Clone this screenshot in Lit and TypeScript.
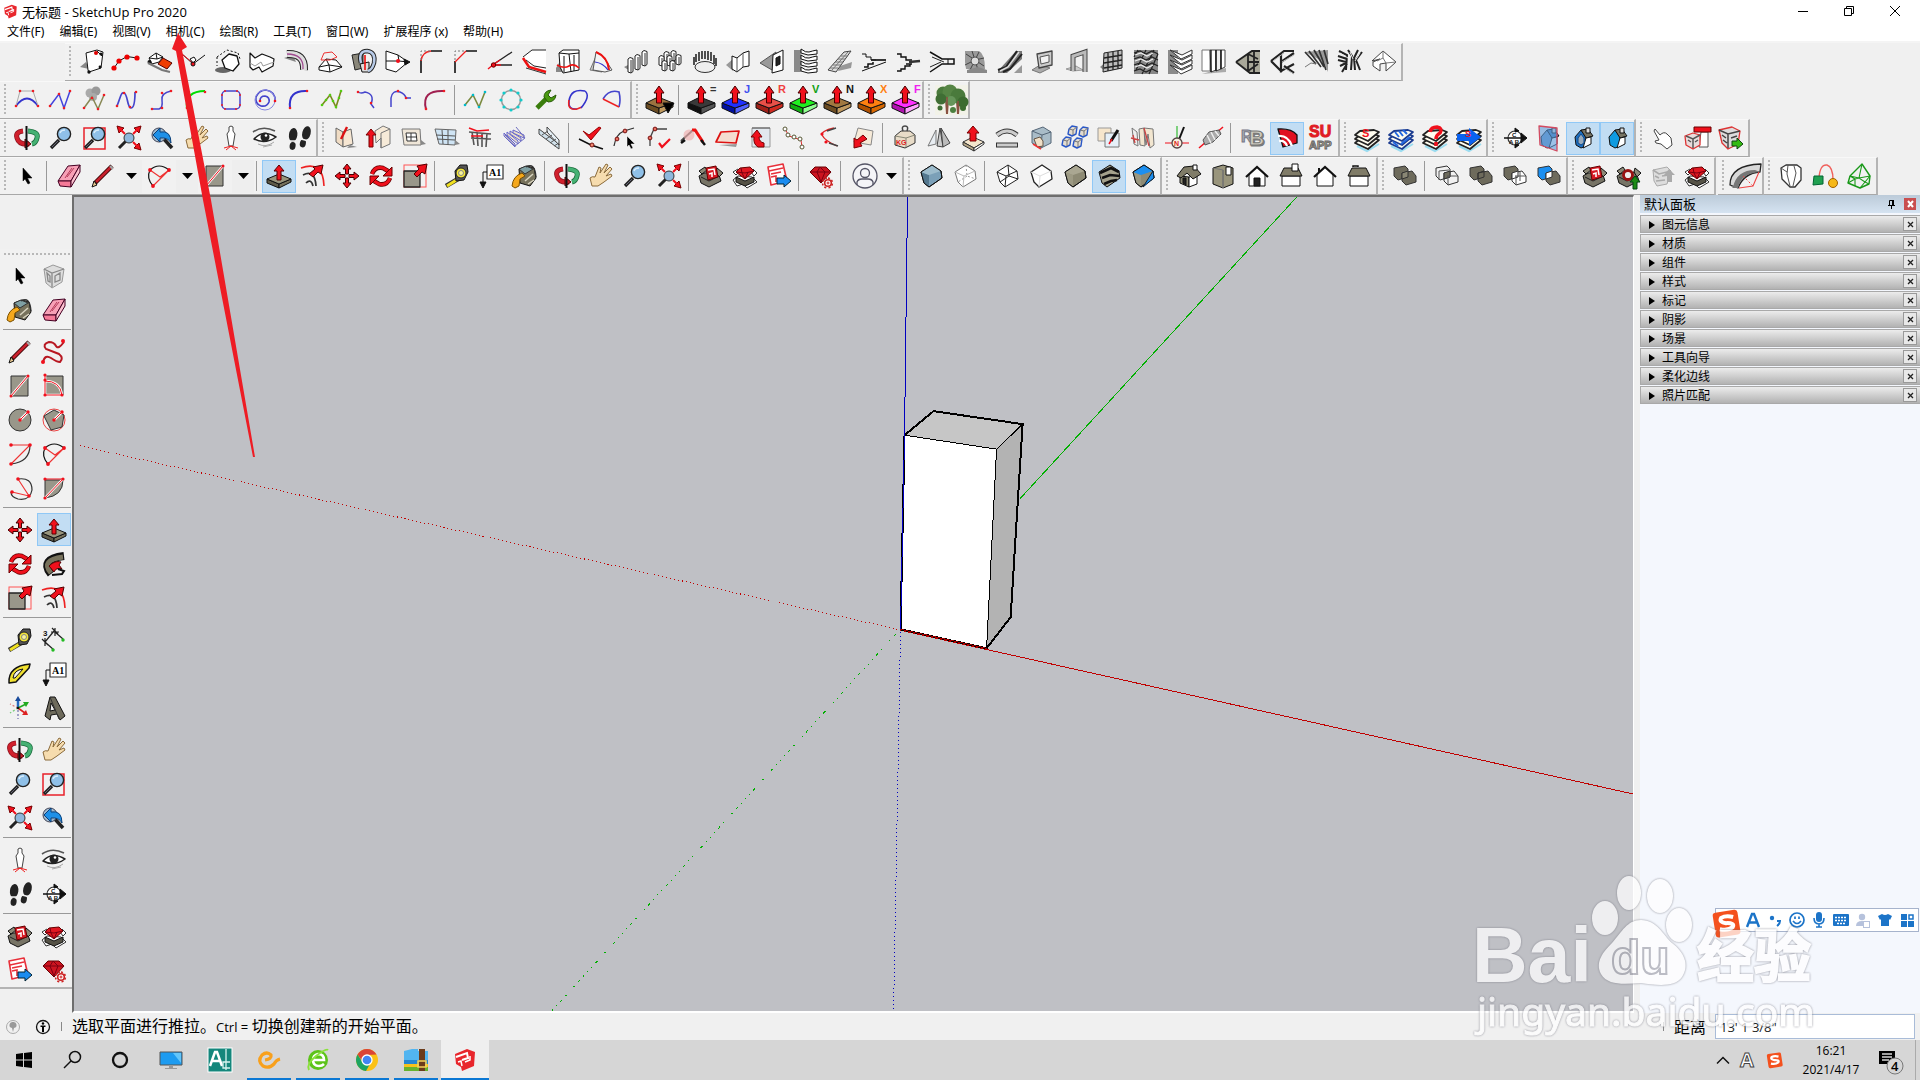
import { LitElement, html, svg, css } from "lit";
import { customElement, property } from "lit/decorators.js";
import { classMap } from "lit/directives/class-map.js";

/* ---------- drawing helpers: every icon lives on a 24 x 24 grid ---------- */
const RED = "#f0101c";
const INK = "#111";
const L = (d: string, s = INK, w = 1) => svg`<path d=${d} fill="none" stroke=${s} stroke-width=${w} />`;
const D = (d: string, s = INK, w = 1) => svg`<path d=${d} fill="none" stroke=${s} stroke-width=${w} stroke-dasharray="2 2" />`;
const F = (d: string, f = "#fff", s = INK, w = 1) => svg`<path d=${d} fill=${f} stroke=${s} stroke-width=${w} stroke-linejoin="round" />`;
const C = (x: number, y: number, r: number, f = RED, s = "none", w = 1) =>
  svg`<circle cx=${x} cy=${y} r=${r} fill=${f} stroke=${s} stroke-width=${w} />`;
const T = (x: number, y: number, t: string, size: number, f = INK, s = "none") =>
  svg`<text x=${x} y=${y} font-size=${size} font-weight="700" fill=${f} stroke=${s}>${t}</text>`;
const dots = (pts: number[][], f = "#ee1c24", r = 1.3) => pts.map(([x, y]) => C(x, y, r, f));
const columns = (pts: number[][], h: number) =>
  pts.map(([x, y]) => [F(`M${x} ${y}l2-1.5 3 1v${h}l-2 1.5-3-1Z`, "#fff", "#222"), L(`M${x + 3} ${y + 1}v${h}`, "#333")]);

const slab = (top: string, left: string, right: string) => [
  F("M-1 15 12 20V26L-1 20Z", left), F("M12 20 26 15V19L12 26Z", right), F("M-1 15 11 9 26 15 12 20Z", top),
];
const upArrow = F("M12-2 17 5H14.5V15H9.5V5H7Z", RED, "#400");
const pusher = (top: string, left: string, right: string, mark: string, ink: string) => [slab(top, left, right), upArrow, T(21, 5, mark, 11, ink)];

const cube = (f: string, side: string, top: string) => [
  F("M2 8 13 1 22 7 23 14 10 23 5 19Z", f), F("M2 8 10 11 10 23 5 19Z", side, "none"), F("M2 8 13 1 22 7 10 11Z", top, "none"),
  L("M2 8 13 1 22 7 23 14 10 23 5 19Z"),
];
const wire = (s: string) => [F("M2 8 13 1 22 7 23 15 10 23 5 18Z", "#fff", s), L("M2 8 11 12 22 7M11 12 10 23M13 1 14 12 23 15M14 12 5 18", s)];
const layers = (s: string) => [
  L("M2 20 12 25 24 18", "#9adcf0", 2),
  [17, 13, 9].map((y) => [F(`M0 ${y} 5 ${y - 4} 19 ${y - 5} 24 ${y - 3} 13 ${y + 6}Z`, "#fffdf0", s, 1.8)]),
];
const lens = [L("M2 22 10 14", "#222", 3.4), L("M3 21 9 15", "#667", 1), C(15, 8, 6.6, "#8fc0e8", "#222", 1.4), L("M11 7Q12 4 16 4", "#d8ecfa", 1.5)];
const handle = [L("M2 22 9 15", "#222", 3), C(12, 12, 5, "#8fb8dc", "#333")];
const fourOut = [F("M0 0 7 2 2 7Z", RED, "#700"), F("M24 0 17 2 22 7Z", RED, "#700"), F("M24 24 17 22 22 17Z", RED, "#700"), L("M4 4 8 8M20 4 16 8M20 20 16 16", RED, 2)];
const house = (wall: string, roof: string) => [F("M4 11 10 4 15 11V20L10 22 5 19Z", wall), F("M10 4 17 3 22 10 15 12Z", roof), F("M15 12 20 11V18L12 22Z", "#fff"), F("M15 2H19V7H15Z", "#ddd")];
const solids = (a: string, b: string, m: string) => [F("M1 4 12 2 15 5V13L5 16 1 12Z", a, "#333"), F("M9 9 19 7 23 12V18L13 21 9 17Z", b, "#333"), F("M9 9 15 7V13L9 15Z", m, "#333")];
const openBox = [F("M0 12 5 9 19 8 22 17 10 23 2 19Z", "#777466"), F("M0 7 6 3 8 6 3 10Z", "#8d8a78"), F("M18 4 24 9 20 13 17 8Z", "#8d8a78"), L("M2 13 10 17 20 12", "#222")];
const gem = [F("M1 8 6 3H17L22 8 12 19Z", "#cc1420", "#600"), L("M1 8H22M8 8 12 18 16 8 11 3Z", "#7a0010")];
const flatGem = [F("M3 8 7 4 17 3 21 7 12 15Z", "#e01822", "#600"), L("M3 8 12 9 21 7M8 4 9 9 12 15 15 8", "#7a0010")];
const suMark = F("M2 6 14 1 22 4 21 18 9 23 8 19 3 16Z", "#e8262c", "none");
const suLines = [L("M3 9 14 5 15 10 9 12", "#fff", 2), L("M5 14 8 13 9 18", "#fff", 1.5), L("M12 14 17 12 17 8", "#fff", 1.5)];
const boxMark = [F("M7 4 17 2 19 13 9 16Z", "#d81a24", "#600"), L("M9 6 15 5 16 11M10 10 13 9 13 13", "#fff", 1.5)];
const hut = (extra: unknown) => [F("M4 11V22H20V11L12 3Z"), L("M1 13 12 3 23 13", INK, 2.2), extra];
const shed = (extra: unknown) => [F("M3 12H21V22H3Z"), F("M5 4H19L23 12H1Z", "#807c68"), extra];

const TAN = "#99978a";
const icons: Record<string, unknown> = {
  sheet: [F("M6 12 0 17 9 19Z", "#888", "none"), F("M6 3 17 0 23 2 21 18 9 22 8 20Z"), L("M17 1 22 6"), C(16, 3, 2, "#d00"), C(21, 4, 1.6, INK), C(9, 22, 1.7, INK), C(20, 17, 1.4, INK)],
  beads: [L("M0 18 5 11 13 6.5 23 8"), dots([[0, 18], [5, 11], [13, 7], [23, 8]], "#e00", 2.6)],
  foldbox: [F("M1 8 8 3 15 7 11 12 4 14Z"), L("M8 3 9 9 15 7M9 9 1 8"), C(1.5, 12, 2, INK), F("M10 14 15 8 24 13 19 19Z", "#f03c00", "#500"), L("M0 13 14 20 22 22", "#777", 2)],
  scalpel: [L("M-1 3 11 14 23 5", INK), L("M0 4 11 13", RED), F("M8 9 12 7 14 10 11 13Z"), C(11, 14, 2, RED, INK)],
  hexagon: [svg`<ellipse cx="7" cy="20" rx="8" ry="3" fill="#666" />`, F("M6 10 13 4 21 6 23 14 17 21 9 18Z", "#fff", INK, 1.3), D("M1 7 11 0 22 3M1 7V16M22 3 24 9")],
  extrude: [F("M0 3 5 8 12 4 20 7 24 9 23 16 12 22 9 17 3 20 0 17Z", "#fff", INK, 1.2), L("M0 13 5 16 11 12 13 16 24 12", "#999")],
  tube: [F("M0 8 9 5 12 12Z", "#888", "none"), L("M3 4Q21 3 20 20", "#222", 8), L("M3 4Q21 3 20 20", "#ddd", 6), L("M3 4Q20 4 19 19", "#a04a90", 1.3)],
  dome: [F("M1 17 8 9 18 10 24 17 12 22 1 20Z"), L("M8 9 11 15 24 17M11 15 1 17M11 15 12 22"), L("M3 10 6 3 14 2 19 7 12 10Z", "#e33")],
  loops: [F("M0 5 11 3V18L3 20Z", "#8a877a", "#222"), F("M8 14 17 12V22H10Z", "#ddd"), L("M9 13Q6 1 15 1 24 2 22 13 20 20 16 21", "#222", 4.5), L("M9 13Q6 1 15 1 24 2 22 13 20 20 16 21", "#b8cbe8", 2.5), L("M13 5V20", "#e00", 1.5)],
  mitre: [F("M0 1 12 5 22 12 10 22 0 19Z", "#fff"), L("M0 11 13 11 22 12M13 11 12 5"), C(12, 11, 2, RED), F("M18 9 24 12 19 15Z", INK)],
  fillet: [L("M1 23V10M11 1H22", INK, 1.6), L("M1 11Q2 2 11 1", "#e22", 1.3), D("M1 10V1H10", "#777")],
  chamfer: [L("M1 23V11M12 1H23", INK, 1.6), L("M1 12 12 1", "#e22", 1.3), D("M1 10V1H10", "#777")],
  branch: [L("M6 14 24 2M6 15H24", "#222", 1.3), L("M0 19 6 14 12 10M6 15H13", RED, 1.4), C(5.5, 15, 2.2, RED, "#600")],
  lip: [F("M1 7 10 0H24V20L10 17Z", "#fff", "none"), L("M1 7 10 0H24M4 10 12 16 24 18", "#222"), L("M1 8 7 17 24 22", "#e11", 2.6), L("M4 18 14 21 24 24", "#333")],
  block: [F("M0 18 6 8V22H0Z", "#888", "none"), F("M3 3 7 0H23V20L7 23 4 17Z"), L("M3 3 13 4 23 3M8 6V22M13 4 15 22M18 5V21"), L("M1 15Q8 19 13 16T23 18", "#e11", 1.5)],
  sail: [F("M0 20 7 4 12 22Z", "#ccc", "#777"), F("M6 2 12 5 22 20 15 22 3 20Z", "#f4f4f4", "#555"), L("M6 2Q18 7 19 20", "#e11", 2), L("M5 12Q13 13 18 20", "#33c", 1.2)],
  posts: [F("M0 17 6 14V21Z", "#888", "none"), columns([[4, 9], [11, 6], [18, 2]], 13)],
  postGrid: columns([[6, 3], [13, 2], [1, 7], [9, 7], [18, 6], [4, 12], [12, 12]], 8),
  postRing: [L("M2 15V7M4 12V4M7 11V2M10 9V1M13 9V1M16 10V1M19 11V2M22 14V5M24 16V8", "#333", 1.7), svg`<ellipse cx="13" cy="17" rx="10" ry="5.5" fill="#eee" stroke="#333" />`],
  card: [F("M0 15 7 9V21Z", "#999", "none"), F("M6 6 11 8 17 3 23 1V16L17 17 11 22 6 19Z"), L("M11 8V22M17 3V17", "#555")],
  wallWindow: [F("M0 13 16 2V14L12 20Z", "#999", "#555"), F("M13 5 23 0V20L12 23Z", "#fff"), F("M16 8 20 6V14L16 16Z", "#222")],
  shelves: [F("M0 0H7V22H0Z", "#8a8a8a", "none"), [1, 7, 13, 19].map((y) => F(`M7 ${y - 2}Q12 ${y + 2} 15 ${y + 1}T23 ${y - 1}V${y + 3}L14 ${y + 4} 7 ${y + 2}Z`))],
  stair: [F("M12 16 24 12 23 18 10 21Z", "#999", "none"), F("M0 20 16 2 23 1 8 22Z", "#ddd", "#444"), L("M2 18H10M5 15H13M7 12H15M10 9H17M13 6H20M4 20 20 2", "#777")],
  steps1: [L("M0 4H4V7H9V10H14M0 21 24 12"), L("M2 17H6V14H11V12", INK, 1.5), L("M9 10 24 10", "#222", 1.8)],
  steps2: [L("M1 4H5V7H10V10H16M14 14V16H9V19H5V21H1M10 14H16", INK, 1.4), L("M13 12 24 11", "#333", 2.5)],
  steps3: [L("M0 2 12 9H24V14H12L0 22", INK, 1.5), L("M2 7 14 12M0 17 11 12", "#222"), L("M18 9V14")],
  spiral: [F("M1 1H15Q21 4 21 19H2L1 12Z", "#999", "none"), L("M11 10 2 4M11 10 8 1M11 10 15 2M11 10 20 8M11 10 20 16M11 10 14 20M11 10 6 20M11 10 1 15", "#444"), C(11, 11, 4, "#ddd", "#555"), F("M14 17 23 20V23H3V20Z", "#888", "none")],
  escalator: [F("M0 21 18 1H24V9L9 23H0Z", "#777", "none"), L("M0 20 8 17 19 1M5 22 12 19 24 4", "#222", 2), L("M2 21 10 17 21 2", "#ddd", 1.5), F("M16 23 24 15V23Z", "#999", "none")],
  frame: [F("M0 20 8 15 18 18 8 23Z", "#aaa", "#777"), F("M5 4 20 1V15L7 18Z", "#ccc", "#444", 1.3), F("M8 7 17 5V12L9 14Z", "#f1f1f1", "#555")],
  portal: [F("M0 19 10 16 17 20 7 21Z", "#ccc", "#999"), L("M7 21V6L19 2V22", "#444", 5), L("M7 21V6L19 2V22", "#bbb", 3)],
  lattice: [F("M0 17 6 12V22Z", "#888", "none"), F("M4 3 22 0V18L3 22Z", "#bbb", "#222"), L("M8 3V21M13 2V20M18 1V19M4 8 22 5M4 13 22 10M4 18 22 15", "#222", 1.3)],
  tiles: [F("M0 0H24V24H0Z", "#888", "none"), L("M0 3 6 1 12 4 18 1 24 4M0 9 6 7 12 10 18 7 24 10M0 15 6 13 12 16 18 13 24 16M0 21 6 19 12 22 18 19 24 22M4 0 0 7M12 0 2 20M20 0 8 24M24 4 15 24", "#222", 1.2), L("M1 5 7 3 13 6 19 3M1 11 7 9 13 12 19 9M1 17 7 15 13 18 19 15", "#eee", 1.2)],
  stackUp: [F("M0 0H10V24H0Z", "#8a8a8a", "none"), [1, 6, 11, 16].map((y) => F(`M2 ${y - 1} 14 ${y + 4} 24 ${y - 1}V${y + 3}L13 ${y + 8}Z`, "#fff", "#333"))],
  curtain: [F("M0 24 10 21 24 18V22Z", "#aaa", "none"), F("M0 0H8V21H0Z", "#fff", "#777"), F("M8 0H14V20L9 22Z", "#fff", "#444"), F("M14 0H19V19L14 21Z", "#eee", "#444"), F("M19 0H23V17L19 19Z", "#fff", "#444"), L("M9 0V22M14 0V21M19 0V19", INK, 1.3)],
  truss: [F("M0 12 16 0H24V24H14Z", "#aaa99a", "none"), L("M0 12 16 1H24M0 12 14 23H24M12 4V21M12 12H23M12 4 22 9M12 21 22 14M18 1V23", "#222", 1.8)],
  truss2: [L("M1 11 14 1H24M1 11 12 22M11 3V21L24 14M11 12 24 3M14 16 24 23", "#222", 2.2), L("M3 11 14 3M12 12 24 5M14 18 24 24", "#bbb", 1)],
  rafters: [F("M1 2 24 0V22L20 12Z", "#999", "none"), L("M1 2 12 14M5 1 17 17M10 0 20 17M15 0 22 20M20 0 24 14", "#333", 1.7), L("M1 17 7 13 12 14", "#777")],
  thicket: [L("M1 1 9 5 8 20M10 0 14 6 13 20M20 0 16 8 17 20M24 2 18 10 22 20M0 10 8 12M2 16 8 13M0 6 9 9M4 22 9 14", "#222", 2), L("M2 3 10 8M12 2 15 9M22 3 17 11", "#eee", 1)],
  diamond: [F("M0 11 11 1 24 12 14 21V13L8 14V21L1 16V12L8 9Z", "#fff", "#444"), L("M11 1V8L14 13 24 12M11 8 5 11", "#777")],

  bezier: [L("M1 18Q12 3 23 18", "#33c", 1.8), L("M1 18 5 3H18L23 18", "#aaa"), dots([[1, 18], [23, 18], [5, 3], [18, 3]])],
  polyline: [L("M1 18 10 6 15 20 21 3", "#44d", 1.5), dots([[1, 18], [10, 6], [15, 20], [21, 3]])],
  pollen: [C(7, 5, 4.5, "#aaa"), C(13, 3, 4.5, "#999"), C(10, 9, 4, "#aaa"), L("M1 20 9 9 15 21 21 7", "#885", 1.5), dots([[1, 20], [9, 10], [15, 21], [21, 7]])],
  nurbs: [L("M0 18C4 8 4 4 7 5 11 6 10 20 14 20 18 20 18 10 18 4", "#44c", 1.7), dots([[0, 18], [7, 5], [13, 19], [19, 4]])],
  sCurve: [L("M1 21H8Q12 20 11 12 10 5 20 3", "#44c", 1.5), dots([[1, 21], [11, 20], [11, 5], [20, 3]])],
  arcGreen: [L("M2 20Q0 3 20 3", "#0d0", 2.2), dots([[2, 20], [20, 4]])],
  rounded: [svg`<rect x="3" y="3" width="18" height="18" rx="4" fill="none" stroke="#44c" stroke-width="1.5" />`, dots([[6, 3], [18, 3], [21, 7], [21, 17], [17, 21], [6, 21], [3, 17], [3, 7]], "#ee1c24", 1)],
  swirl: [L("M7 13Q7 8 12 8 17 9 16 14 14 19 8 18 2 16 3 9 6 2 13 2 23 4 22 13", "#44c", 1.6), C(12, 12, 10, "none", "#88d"), C(7, 13, 1.3), C(22, 13, 1.3)],
  arcBlue: [L("M3 20Q1 2 20 3", "#33c", 2), dots([[3, 20], [20, 3]])],
  zigGreen: [L("M1 17 9 7 15 19 20 3", "#7a8a20", 1.6), dots([[1, 17], [5, 12], [9, 7], [12, 13], [15, 19], [18, 10], [20, 3]], "#5c1", 1.3)],
  hook: [L("M3 4Q6 6 10 4 20 6 16 16L19 20", "#44c", 1.5), dots([[3, 4], [16, 15]])],
  hook2: [L("M2 19V10Q3 2 11 4 16 6 17 10H22", "#44c", 1.5), dots([[9, 3], [17, 10]])],
  arcWine: [L("M3 21Q-2 2 21 3", "#a02050", 2), dots([[3, 21], [21, 3]])],
  zigCyan: [L("M0 17 8 7 14 19 20 4", "#7a8a40", 1.6), dots([[0, 17], [8, 7], [14, 19], [20, 4]], "#0bc", 1.3)],
  ringCyan: [C(12, 12, 9.5, "none", "#999", 1.5), dots([[12, 2], [19, 5], [22, 12], [19, 19], [12, 22], [5, 19], [2, 12], [5, 5]], "#1cc", 1.6)],
  wrench: [L("M4 20 14 10", "#3a7d0c", 4.6), F("M11 9Q11 3 18 2L15 7 18 10 23 7Q22 14 15 14Z", "#4a9a10", "#285a08")],
  loopTwo: [L("M18 3Q4 0 2 13 1 22 10 21", "#33c", 1.6), L("M2 12Q0 23 10 21L15 19", "#e22", 1.6), L("M18 3Q24 8 14 20", "#33c", 1.5)],
  pie: [L("M2 11Q8 1 18 4 20 12 18 19", "#44c", 1.6), L("M2 11 18 19", "#e22", 1.5)],

  pushMenu: [slab("#9b7340", "#6b4c22", "#c09a60"), upArrow, F("M16 15H27L21 25Z", "#000")],
  push: pusher("#3a3a3a", "#111", "#555", "=", "#333"),
  pushJ: pusher("#2030ff", "#0010a0", "#5060ff", "J", "#4050f0"),
  pushR: pusher("#e85048", "#a02018", "#d02a20", "R", "#f04040"),
  pushV: pusher("#20f020", "#10b010", "#90ff90", "V", "#10a010"),
  pushN: pusher("#a07840", "#6b4c22", "#c09a60", "N", "#111"),
  pushX: pusher("#ff8010", "#b05000", "#d86800", "X", "#ff8010"),
  pushF: pusher("#ff30ff", "#b010b0", "#ffa0ff", "F", "#f020f0"),
  tree: [
    F("M-4-3H29V27H-4Z", "#f2f2e8", "none"), F("M6 12 7 26H9L10 12M17 14 18 26H20L21 14", "#8a5a48", "none"),
    C(4, 5, 6.5, "#4a7a3c"), C(11, 4, 7.5, "#568545"), C(2, 11, 5.5, "#3f6e34"), C(19, 8, 7.5, "#4a7a3c"), C(24, 14, 5.5, "#3c6c30"), C(12, 13, 5, "#66955a"), C(1, 20, 2.5, "#3f6e34"), C(14, 22, 3, "#4c8040"), C(24, 20, 3, "#3c6c30"), L("M8 9V26M19 13V26", "#8a5040", 1.6),
  ],

  orbit: [L("M8 5Q0 6 2 12 4 19 14 18", "#8d1420", 5), L("M8 5Q0 6 2 12 4 19 14 18", "#d0202c", 3.5), L("M13 5Q24 6 22 12 21 17 17 18", "#1b6b3c", 5), L("M13 5Q24 6 22 12 21 17 17 18", "#45b173", 3.5), F("M10 13 16 18 10 22Z", "#c81c28", "#500"), L("M11.5 0V24", INK, 2)],
  pan: [F("M3 22 1 14Q3 12 6 13L10 3 12 4 11 9 17 0 19 1 15 9 21 3 23 5 17 12 22 10 23 12 15 18 9 22Z", "#f6dcae", "#8a6a3a")],
  zoom: lens,
  zoomWindow: [svg`<rect x="1" y="2" width="21" height="21" fill="none" stroke="#e8202a" stroke-width="1.5" />`, lens],
  extents: [handle, fourOut],
  previous: [L("M12 12 21 22", "#222", 3.5), C(8, 9, 7, "#9fb9cf", "#445"), F("M2 9 9 2V6Q20 4 20 17 17 11 9 12V16Z", "#1e90e8", "#0b3f78")],
  person: [F("M10 1Q12-1 14 1L14 5 16 8 15 14 14 20H10L9 14 8 8 10 5Z", "#fff", "#444"), L("M7 24 12 20 17 24M12 20 5 22M12 20 19 22", "#e22")],
  eye: [L("M0 6Q10-1 22 5", "#555", 1.6), F("M1 13Q10 3 23 11 12 19 1 13Z", "#fff", "#222", 1.5), C(12, 11, 4.5, "#222"), C(13, 9.5, 1.3, "#fff"), L("M5 18Q13 22 21 16M10 21 19 19", "#aaa")],
  feet: [svg`<g transform="rotate(8 7 10)"><ellipse cx="6" cy="9" rx="4.2" ry="7" fill="#222"/><ellipse cx="7" cy="20" rx="3" ry="4" fill="#222"/></g><g transform="rotate(14 19 9)"><ellipse cx="19" cy="7" rx="4.2" ry="7" fill="#222"/><ellipse cx="18" cy="18" rx="3" ry="4" fill="#222"/></g>`, L("M1 15H11M14 13 22 15", "#f0f0f0", 1.3)],

  wallPen: [F("M3 2 10 6V21L3 16Z", "#f0dcc4", "#666"), F("M10 6 18 3 20 18 10 21Z", "#f6e6d2", "#666"), F("M17 19 24 21 14 22Z", "#888", "none"), L("M14 1 8 13", "#d11", 2.4)],
  wallUp: [F("M8 5 16 0 23 3V18L14 22V12L9 17Z", "#f6ead8", "#777"), L("M14 7 23 3M14 7V22", "#777"), F("M4 3 9 9H6V21H2V9H-1Z", RED, "#700")],
  windowFrame: [F("M1 3H19L20 19H3Z", "#efe6d8", "#777"), F("M5 7H15L16 15H6Z", "#fff", "#333"), L("M10 7V15M5 11H16", "#333"), F("M20 14 25 18 20 19Z", "#888", "none")],
  glass: [F("M0 3 21 4 20 19 4 18Z", "#cfe4f4", "#666"), L("M7 4 8 18M13 4V19M1 9 20 10M2 13 20 14", "#555"), F("M20 14 25 18 20 19Z", "#888", "none")],
  fence: [L("M0 6 22 8M2 12 22 13M3 6 5 19M8 6 9 20M13 7V21M18 7 17 21", "#555", 1.6), L("M0 2 8 5 20 4M2 10H14", RED, 1.6)],
  stairsUp: [[0, 1, 2, 3].map((i) => F(`M${1 + i * 3} ${7 - i} ${12 + i * 3} ${18 - i * 3}V${21 - i * 3}L${1 + i * 3} ${10 - i}Z`, "#eadfca", "#66c")), L("M2 9 12 20 22 12 13 1", "#7070c0")],
  ladder: [F("M2 3 22 18V23L2 8Z", "#cfe0ea", "#444"), F("M10 1 22 14V19L10 6Z", "#e6f0f6", "#444"), L("M5 9 11 5M9 13 15 9M13 17 19 13M17 20 22 17", "#555")],

  nodeCheck: [L("M0 13 12 19 24 23", INK, 1.5), F("M4 5 10 9 20 1 22 2 12 14Z", RED, "#900"), C(13, 19, 2, "#f08870", "#711")],
  nodePick: [L("M1 20Q3 8 11 5L21 2", "#333", 1.3), C(4, 13, 1.9, "#e87060", "#711"), C(12, 5, 1.9, "#e87060", "#711"), F("M14 10 22 18H18L20 22 18 23 16 19 14 21Z", "#000", "#fff", 0.5)],
  nodeRed: [L("M3 20V12L7 3H20", "#444", 1.3), C(3, 12, 1.9, "#e87060", "#711"), C(8, 3, 1.9, "#e87060", "#711"), L("M12 17 15 21 23 13", RED, 2.2)],
  peak: [L("M0 15 12 4 16 5", "#444", 2), L("M11 4 14 4 22 16", "#e11", 3), C(8, 9, 5.5, "#f0b0b0aa"), L("M0 17 4 14M20 14 24 19", INK, 2.5)],
  face: [F("M6 6 24 5 21 17 1 16Z", "#f4ddd0", "#d11", 1.7), F("M4 19 22 18 21 21Z", "#999", "none")],
  turnUp: [F("M3 2H21V21H3Z", "#e2e8ee", "#999"), L("M3 2H21", "#555"), F("M2 11 8 4 13 11H10Q10 16 15 17V21H9Q4 18 5 11Z", RED, "#700")],
  chain: [L("M2 3 6 10 12 12 18 14 19 21", "#d33", 1), [[2, 3], [5, 9], [11, 11], [17, 13], [19, 21]].map(([x, y]) => C(x, y, 2, "#fff", "#553"))],
  bend: [L("M17 2Q4 5 5 9 8 15 20 20", "#d22", 1.3), L("M10 5 19 2M12 17 21 20", "#444", 1.5), dots([[5, 8], [9, 16]], RED, 1.6)],
  arrowFace: [F("M7 2 22 5 20 19 3 16Z", "#f6ead8", "#888"), F("M3 22 3 12 6 14 12 9 16 13 9 17 11 20Z", RED, "#700")],
  weight: [F("M2 10 8 5H17L22 9V17L12 22 2 19Z", "#e8dcc8", "#333"), L("M2 10 13 12 22 9M13 12V21", "#887"), L("M10 5Q8 0 12 0T14 5", "#444", 1.5), T(3, 19, "KG", 7, "#d22")],
  mirror: [F("M1 20 9 4V18Z", "#e8edf2", "#777"), F("M10 20 13 2 16 21Z", "#ccc", "#444"), F("M14 2 23 17 16 21Z", "#bbb", "#444")],
  pullUp: [F("M2 16 12 11 23 16 13 22Z", "#f4e6cc", "#333"), F("M2 16V19L13 25V22Z", "#b8a888", "#333"), F("M13 22 23 16V18L13 25Z", "#fff", "#333"), F("M12 0 18 7H15V15H9V7H6Z", RED, "#700")],
  bendPipe: [L("M2 9Q12 1 22 9", "#333", 5), L("M2 9Q12 1 22 9", "#ccc", 3), L("M1 19H23", "#333", 5), L("M2 19H22", "#ccc", 3)],
  glassBox: [F("M3 5 14 1 22 6V17L12 22 3 17Z", "#a9bcc8", "#567"), L("M3 5 13 9 22 6M13 9 12 22", "#567"), F("M5 13 11 11 14 15V20L8 21Z", "#f0e0c8", "#654"), L("M4 18 12 23", "#e33", 1.5)],
  blocks: [[6, 0], [17, 1], [0, 11], [11, 12]].map(([x, y]) => [F(`M${x} ${y + 3} ${x + 3} ${y} ${x + 8} ${y + 1} ${x + 7} ${y + 8} ${x + 3} ${y + 10} ${x - 1} ${y + 8}Z`, "#e4ddd0", "#2a58c8", 1.4), L(`M${x} ${y + 3} ${x + 4} ${y + 4} ${x + 8} ${y + 1}M${x + 4} ${y + 4}V${y + 9}`, "#777")]),
  picker: [F("M1 2H14V15H1Z", "#f6e6cc", "#999"), F("M8 7H22V21H8Z", "#e6f0f8", "#777"), L("M21 4 14 15", INK, 3), L("M15 13 12 18", RED, 1.5)],
  letters3d: [F("M1 2 6 6 7 20 3 18Z", "#eee", "#777"), F("M8 3 13 2 14 20 9 19Z", "#f2e6d0", "#777"), F("M13 2 22 3 23 19 19 22 17 8 15 19Z", "#f2e6d0", "#777"), L("M0 12 8 14M2 9 4 17M13 2 18 20", "#c44", 1.3)],
  compass: [L("M12 0V12", "#3b3", 1.2), L("M0 17H24", RED, 1), L("M13 16 19 1", INK, 2), C(12, 17, 5, "#f8f0e0", "#544", 1.3), T(9, 20, "N", 7, "#d22")],
  rope: [L("M0 22 24 1", RED, 1.5), F("M4 14 10 6 20 4 22 8 14 16 6 19Z", "#aaa", "#555"), L("M8 9 12 17M12 6 16 14M16 5 20 10", "#eee", 1.5)],
  rb: [T(0, 16, "R", 16, "#a9b0b2", "#778"), T(9, 20, "B", 21, "#8a8a84", "#777"), T(8, 19, "B", 21, "#d0ccc0", "#777")],
  suapp: [F("M3 3Q16 2 22 9V17L8 21Z", "#e01020", INK, 1.3), L("M3 10Q13 9 17 20M4 15Q10 14 12 20", "#fff", 2.3)],
  suText: [T(0, 11, "SU", 16, "#e01c24", "#e01c24"), T(0, 23, "APP", 11, "#d8c8b0", "#666")],

  layerS: [layers("#222"), T(7, 11, "S", 11, RED)],
  layerW: [layers("#1c3c90"), L("M6 6 10 11M10 5 14 10M14 4 18 8M4 16 9 20M12 18 21 11", "#2368e0", 2)],
  layerAsk: [layers("#222"), L("M7 6Q8 1 14 1 20 2 17 7 13 9 13 13M13 16V20", RED, 3.5)],
  layerGo: [layers("#222"), F("M0 8H12V2L24 11 12 20V15H0Z", "#0a62f0", "none"), T(8, 11, "S", 9, RED)],

  section: [C(12, 12, 7, "#fff", "#333", 1.2), F("M18 7 24 12 18 17Z", INK), F("M12 2 16 5 12 6ZM12 22 16 19 12 18Z", INK), L("M1 12H23", INK, 1.5), T(9, 11, "C", 6), T(6, 18, "A B", 6)],
  cutPlane: [house("#6f9ccb", "#4d80b8"), F("M2 0 20 2V25L3 19Z", "#5a9ad899", "#d34a60", 1.3)],
  cutHouse: [house("#1f6fc0", "#777464"), F("M7 12 10 8 13 12V17L10 19 7 17Z", "#9ab", "#0b4a8c", 1)],
  cutFill: house("#0f9be0", "#777464"),
  pointer: [F("M3 5 4 3 9 9Q13 5 16 8L20 12 21 19 16 23 10 18 5 17 4 15 8 14Z", "#fff", "#444")],
  compList: [F("M16 6H23V21H14Z", "#fff", "#555"), F("M9 1H26V6H9Z", RED, "#600"), F("M0 10 8 7 15 9V19L8 23 1 19Z", "#e8dcdc", "#d33", 1.3), L("M1 10 8 13 15 9M8 13V22M3 14 6 16M10 16 13 14", "#555", 1.5)],
  compGo: [F("M0 4 13 1 21 5 19 18 9 23 3 17Z", "#ddd", "#d33", 1.3), L("M0 4 9 8 21 5M9 8V22M3 9 7 12M12 12 18 10M4 14 8 17", "#444", 1.5), F("M13 15H18V12L24 18 18 23V20H13Z", "#3b1", "#141")],

  select: [F("M8 4 17 14H12.5L15 19 13 20 10 15 8 17Z", "#000", "#000", 0.5)],
  eraser: [F("M1 17 11 2 23 1 14 17Z", "#f7a0b6", "#402"), F("M1 17 14 17V23L3 22Z", "#f57a98", "#402"), F("M14 17 23 1V8L14 23Z", "#fbc0ce", "#402"), L("M8 14 15 4M10 13 17 4", "#b33a58", 1)],
  pencil: [L("M4 19 21 2", "#300", 4.4), L("M5 18 20 3", "#c8202c", 2.6), F("M1 23 3 17 6 21Z", "#e8c890", INK), L("M19 2 22 5", "#aaa", 2)],
  arc: [L("M3 6Q12-2 22 6", INK, 1.2), L("M3 6Q-1 14 6 22", INK, 1.2), L("M3 6 13 13 22 6M22 6 6 22", "#e33", 1.1), dots([[3, 6], [22, 6], [6, 22]], RED, 1.9)],
  rect: [F("M3 2H20V22H3Z", TAN, "#333"), L("M3 22 20 2", "#fff", 2.5), L("M3 22 20 2", RED, 1), dots([[3, 22], [20, 2]], RED, 1.5)],
  pushPull: [F("M0 15 12 20V24L0 19Z", "#5e5a48"), F("M12 20 24 15V18L12 24Z", "#77725c"), F("M0 15 12 10 24 15 12 20Z", "#99957c"), F("M12 1 17 7H14V16H10V7H7Z", RED, "#500")],
  offset: [L("M0 4Q22-4 23 22", "#e22", 1.6), L("M2 11Q14 5 15 22M5 19Q10 14 12 22", "#333", 1.7), F("M22 1 20 10 17 8 12 13 8 10 14 5 12 3Z", RED, "#500")],
  move: [F("M12 0 16 5H13.5V10H10.5V5H8ZM12 24 16 19H13.5V14H10.5V19H8ZM0 12 5 8V10.5H10V13.5H5V16ZM24 12 19 8V10.5H14V13.5H19V16Z", RED, "#400")],
  rotate: [L("M3 10Q6 2 14 4L19 7", "#600", 4.5), L("M3 10Q6 2 14 4L19 7", RED, 3), F("M23 3V12H14Z", RED, "#600"), L("M21 14Q18 22 10 20L5 17", "#600", 4.5), L("M21 14Q18 22 10 20L5 17", RED, 3), F("M1 21V12H10Z", RED, "#600")],
  scale: [svg`<rect x="1" y="1" width="22" height="22" fill="none" stroke="#f55" />`, F("M1 7H17V23H1Z", TAN, "#222", 1.3), F("M24 0 22 10 19 8 14 13 11 10 16 5 14 2Z", RED, "#500")],
  tape: [L("M1 22 13 15", "#333", 4.5), L("M2 22 13 15", "#f0e020", 2.8), F("M10 7 15 1H22L23 8 19 16 11 17Z", "#555", INK), C(16, 9, 5, "#f4e63a", "#222"), C(16, 9, 2.5, "#f8f49a", "#888")],
  label: [F("M8 1H24V15H8Z", "#fff", "#333", 1.2), svg`<text class="serif" x="10" y="12" font-size="10" font-weight="700">A1</text>`, L("M8 8H4V20"), F("M1 18H7L4 24Z", INK)],
  paint: [F("M6 5 14 2 21 4 23 14 17 22 7 19Z", "#77725c", INK), F("M6 5 13 2 20 5 12 10Z", "#7fa0a4", "#333"), L("M13 3Q22-2 23 13", "#333", 1.3), F("M-1 22Q0 12 9 9L12 12 7 15 6 22 2 24Z", "#f5a81c", "#7a5000"), L("M12 17 20 10M15 20 21 16", "#d8d4c0", 1.5)],
  warehouse: [openBox, boxMark],
  warehouseGem: [F("M0 16 5 12 19 13 24 18 14 24 10 20 4 22Z", "#fff", "#333"), F("M3 13 12 17 21 13V18L12 22 3 18Z", "#555246"), F("M0 8 5 5 7 7 3 11ZM20 5 24 9 21 12 18 8Z", "#fff", "#333"), flatGem],
  layout: [F("M1 3 16 0 20 17 4 21Z", "#fff", "#e8303a", 1.6), L("M2 7 16 4M4 10 14 8M4 13 9 12V18", "#e8303a", 1.6), F("M10 14H17V11L24 17 17 23V20H10Z", "#1a8cf0", "#023")],
  gemGear: [gem, C(19, 19, 3.3, "#fff", "#c22", 1.6), C(19, 19, 1, "#fff", "#c22"), D("M19 14A5 5 0 1 1 18 14", "#c22", 1.5)],
  account: [C(14, 12, 12, "#f5f5f8", "#556", 1.3), C(14, 9, 4.5, "none", "#556", 1.3), L("M6 21V18Q7 15 11 15H17Q21 15 22 18V21", "#556", 1.3)],

  xray: cube("#7ba0b8", "#54788f", "#9dbccc"),
  backEdges: [F("M2 8 13 1 22 7 23 15 10 23 5 18Z", "#fff", "#777"), D("M13 1 14 12 23 15M14 12 5 18", "#999"), L("M2 8 11 12 22 7M11 12 10 23", "#bbb")],
  wireframe: wire("#222"),
  hiddenLine: [F("M2 8 13 1 22 7 23 15 10 23 5 18Z", "#fff", "#222", 1.3), L("M11 12 10 23M2 8 11 12 22 7", "#ddd")],
  shaded: cube("#8d8a74", "#9d9a84", "#aaa792"),
  textured: [F("M2 8 13 1 22 7 23 14 10 23 5 19Z", "#a5a28c", INK), L("M3 9 14 4 22 8M5 14 13 11 23 12M7 20 14 17 20 16", INK, 2.6)],
  mono: [cube("#8d8a74", "#9a9780", "#1c8ff0"), F("M22 7 23 14 12 23Z", "#1c8ff0", "#123")],
  isoView: [F("M3 12V19L12 23V13Z", "#8d8a74"), F("M12 13V23L20 20V11Z", "#fff"), F("M0 12 7 3 17 2 24 10 16 15 10 9 4 14Z", "#807c68"), F("M16 1H20V6H16Z", "#fff"), F("M6 14H9V21L6 19Z", "#222")],
  topView: [F("M2 4 12 1 22 4V20L12 24 2 20Z", "#99957c"), L("M12 6V24", "#666"), F("M15 3H20V11H15Z", "#fff"), L("M12 24V6L2 4", "#777")],
  frontView: hut(F("M9 14H15V22H9Z", "#222")),
  rightView: shed(F("M13 0H19V7H13Z")),
  backView: hut(L("M6 4V8", INK, 2)),
  leftView: shed(L("M6 3V2H11V3", INK, 1.5)),

  solidOuter: solids("#6e6b5c", "#6e6b5c", "#8a8775"),
  solidIntersect: [solids("none", "none", "#6e6b5c"), L("M4 7 14 6M4 7V16M12 12 23 12M13 12V21", "#555")],
  solidUnion: solids("#6e6b5c", "#6e6b5c", "none"),
  solidSubtract: [solids("#6e6b5c", "#fff", "#fff"), L("M12 12 23 12M13 12V21M17 8V17", "#555")],
  solidTrim: solids("#1c8ff0", "#6e6b5c", "#fff"),
  upload: [openBox, C(11, 11, 4.5, "#eee", "#911", 2.8), F("M18 12 23 18H20V25H16V18H13Z", "#1a8c14", "#041")],
  uploadOff: [F("M2 6 16 3 20 7 16 20 6 22 3 17Z", "#ddd", "#aaa"), L("M2 6 8 10 20 7M4 12 8 14M11 12 18 11M5 17 14 16", "#aaa", 1.6), F("M18 5 24 11H21V18H16V11H13Z", "#aaa", "none")],
  archCurve: [F("M-3 21Q-3 1 28 0L27 8Q11 9 5 24Z", "#d8d8d8", "#222", 1.3), F("M-3 21 0 24 5 24Q8 9 27 8L22 6Q4 6 0 23Z", "#777", "none"), L("M6 24 20 22 26 8", "#e44", 1.1), D("M10 12 20 22", "#e44")],
  stone: [F("M2 4 7 1H18L22 4V16L16 23H11L3 15Z", "#fff", "#333", 1.3), L("M9 1 8 10 11 22M15 2 17 9 14 22M2 4 8 8", "#555")],
  link: [L("M6 14Q7 0 14 1 20 3 20 16", "#f0605c", 1.4), F("M1 12H10V20L0 21Z", "#20a050", "#063"), C(20, 19, 4.5, "#f6b818", "#a06000")],
  crystal: [F("M1 19 3 12 15 0 23 12 22 20 13 24Z", "none", "#189818", 1.4), L("M3 12 12 14 23 12M15 0 12 14M1 19 8 15 12 14 18 18 22 20M8 15 8 22M13 24 18 18 23 12M3 12 8 15", "#189818", 1.1)],

  component: [F("M2 5 11 1 22 5 20 18 10 24 4 19Z", "#ddd", "#999"), L("M2 5 10 9 22 5M10 9V23M5 9 8 12V18L6 17ZM13 12 18 9V16L13 18Z", "#888", 1.3)],
  freehand: [L("M1 22Q3 14 9 18T18 22Q22 18 17 14L4 9Q0 4 7 2 12 2 14 6T22 2", "#b81822", 2), dots([[1, 22], [21, 1]], RED, 2)],
  rotRect: [F("M3 2H21V21H3Z", TAN, "#333"), L("M3 1V21H20M3 7Q18 7 20 21", "#fff", 2.6), L("M3 1V21H20M3 7Q18 7 20 21", RED, 1), dots([[3, 1], [3, 6], [3, 21], [20, 21]], RED, 1.6)],
  circle: [C(12, 12, 11, TAN, "#333"), L("M12 12 20 4", "#fff", 2.5), L("M12 12 20 4", RED, 1), dots([[12, 12], [20, 4]], RED, 1.7)],
  polygon: [C(12, 12, 11, "#f2f2f2", "#e44"), F("M2 8 12 2 22 7 20 19 9 22Z", TAN, "#333"), L("M12 12 20 4", "#fff", 2.5), L("M12 12 20 4", RED, 1), dots([[12, 12], [20, 4]], RED, 1.7)],
  arcTwo: [L("M3 22Q22 20 22 3", "#333", 1.2), L("M3 3H22L3 22", "#e33", 1.1), dots([[3, 3], [22, 3], [3, 22]], RED, 1.8)],
  arcThree: [L("M10 3Q24 1 24 14 22 25 10 23 3 21 3 16", "#333", 1.2), L("M10 3 21 20 4 16", "#e33", 1.1), dots([[10, 3], [21, 20], [4, 16]], RED, 1.8)],
  pieSlice: [F("M3 4H21Q21 20 3 22Z", TAN, "#333"), L("M3 22 21 3", "#fff", 2.5), L("M3 3H21L3 22", RED, 1), dots([[3, 3], [21, 3], [3, 22]], RED, 1.6)],
  followMe: [L("M9 22Q-3 7 22 4", INK, 8), L("M9 21Q-2 8 21 5", "#77725c", 5), F("M7 14Q13 8 19 10L17 13 20 17Q14 15 12 20Z", RED, "#500"), L("M16 17 22 19 20 22 10 23", INK, 2)],
  dimension: [L("M3 14 12 3M3 14 12 22M13 4 21 11M0 11 6 17M10 0 16 6M3 10V18M13 0V8M9 4H17", "#222", 1.2), T(1, 8, "3", 8), dots([[11, 22], [21, 12]], "#2b2", 1.7)],
  protractor: [F("M1 21Q0 4 22 2L21 6 8 20Z", "#f0e030", INK, 1.5), F("M5 16Q6 8 15 7L7 16Z", "#f2f2f2", INK)],
  axes: [L("M10 12V3", "#2468c0", 2.5), F("M7 5 10 0 13 5Z", "#1a4c9c", "none"), L("M10 12 18 8", "#2a2", 1.6), F("M15 6 21 6 18 11Z", "#2a2", "none"), L("M10 12 17 17", "#d22", 1.6), F("M14 19 20 19 18 14Z", "#d22", "none"), D("M10 14V23", "#88b", 1.5), D("M10 12 2 17", "#7c7", 1.3), D("M10 12 2 8", "#d77", 1.3), C(10, 12, 1.3, INK)],
  text3d: [F("M3 20 8 1 13 1 23 20 18 24 15 18 9 19 8 24Z", "#6e6b5c"), F("M9 7 13 14 8 15Z", "#f0f0f0"), L("M8 1 17 23", "#333")],
};

const names: Record<string, string> = { select: "选择", eraser: "橡皮擦", pencil: "直线", pushPull: "推拉", move: "移动", rotate: "旋转", scale: "缩放" };

/* "|" separates groups, "*" marks a pressed tool, "+" adds a menu arrow */
const rows: string[][] = [
  ["sheet beads foldbox scalpel hexagon extrude tube dome loops mitre fillet chamfer branch lip block sail posts postGrid postRing card wallWindow shelves stair steps1 steps2 steps3 spiral escalator frame portal lattice tiles stackUp curtain truss truss2 rafters thicket diamond"],
  [
    "bezier polyline pollen nurbs sCurve arcGreen rounded swirl arcBlue zigGreen hook hook2 arcWine | zigCyan ringCyan wrench loopTwo pie",
    "pushMenu | push pushJ pushR pushV pushN pushX pushF",
    "tree",
  ],
  [
    "orbit zoom zoomWindow extents previous pan person eye feet",
    "wallPen wallUp windowFrame glass fence stairsUp ladder | nodeCheck nodePick nodeRed peak face turnUp chain bend arrowFace | weight mirror pullUp bendPipe glassBox blocks picker letters3d compass rope | rb *suapp suText",
    "layerS layerW layerAsk layerGo",
    "section cutPlane *cutHouse *cutFill",
    "pointer compList compGo",
  ],
  [
    "select | eraser pencil+ arc+ rect+ | *pushPull offset move rotate scale | tape label paint | orbit pan zoom extents | warehouse warehouseGem layout | gemGear | account+",
    "xray backEdges | wireframe hiddenLine shaded *textured mono",
    "isoView topView frontView rightView backView leftView",
    "solidOuter | solidIntersect solidUnion solidSubtract solidTrim",
    "warehouse upload uploadOff warehouseGem",
    "archCurve",
    "stone link crystal",
  ],
];
const sideGroups = [
  "select component paint eraser",
  "pencil freehand rect rotRect circle polygon arcTwo arc arcThree pieSlice",
  "move *pushPull rotate followMe scale offset",
  "tape dimension protractor label axes text3d",
  "orbit pan zoom zoomWindow extents previous",
  "person eye feet section",
  "warehouse warehouseGem layout gemGear",
];

@customElement("tool-button")
export class ToolButton extends LitElement {
  @property() tool = "";
  static styles = css`
    :host { display: flex; flex: none; }
    button { font-family: "Liberation Sans", sans-serif; display: grid; place-items: center; width: 34px; height: 33px; padding: 0; border: 1px solid transparent; background: none; }
    button.on { background: #c2ddf3; border-color: #90c8f6; }
    button.more { width: 22px; background: #eee; }
    svg { display: block; width: 24px; height: 24px; overflow: visible; }
    svg.tri { width: 11px; height: 6px; }
    .serif { font-family: "Liberation Serif", serif; }
  `;
  render() {
    const on = this.tool.startsWith("*");
    const key = this.tool.replace(/[*+]/g, "");
    return html`<button class=${classMap({ on })} aria-label=${names[key] ?? key} aria-pressed=${on}>
        <svg viewBox="0 0 24 24">${icons[key]}</svg>
      </button>
      ${this.tool.endsWith("+")
        ? html`<button class="more" aria-label="更多"><svg class="tri" viewBox="0 0 11 6"><path d="M0 0H11L5.5 6Z" /></svg></button>`
        : ""}`;
  }
}

@customElement("tool-bar")
export class ToolBar extends LitElement {
  @property() items = "";
  static styles = css`
    :host { display: flex; align-items: center; height: 38px; box-sizing: border-box; background: #f1f1f1; border-right: 2px solid #b4b4b4; border-bottom: 1px solid #a8a8a8; border-top: 1px solid #f8f8f8; }
    .grip { width: 2px; height: 32px; margin: 0 4px; background: repeating-linear-gradient(#b8b8b8 0 2px, transparent 2px 4px); }
    .sep { width: 1px; height: 30px; margin: 0 5px 0 2px; background: #999; }
  `;
  render() {
    return html`<span class="grip"></span>${this.items
        .split(" ")
        .map((t) => (t === "|" ? html`<span class="sep"></span>` : html`<tool-button tool=${t}></tool-button>`))}`;
  }
}

const sogou = svg`<g transform="rotate(-9 14 14)"><rect x="1" y="2" width="25" height="25" rx="3" fill="#f4511e"/><path d="M21 9Q14 6 9 8 6 12 13 14 22 15 19 19 14 22 6 19" fill="none" stroke="#fff" stroke-width="4"/></g>`;

const taskIcons = [
  { name: "开始", on: false, line: false, art: svg`<path d="M4 6 11 5V11.5H4ZM12 5 20 4V11.5H12ZM4 12.5H11V19L4 18ZM12 12.5H20V20L12 19Z" fill="#000"/>` },
  { name: "搜索", on: false, line: false, art: svg`<circle cx="15" cy="9" r="5.5" fill="none" stroke="#111" stroke-width="1.5"/><path d="M11 13 4 20" stroke="#111" stroke-width="1.5"/>` },
  { name: "语音助手", on: false, line: false, art: svg`<circle cx="12" cy="12" r="7" fill="none" stroke="#111" stroke-width="2.3"/>` },
  { name: "电脑", on: false, line: false, art: svg`<path d="M1 4 23 4V17L1 17Z" fill="#1d9bf0" stroke="#555"/><path d="M2 5H14L22 15V5Z" fill="#63c6fa"/><path d="M10 17H14V20H18V21H6V20H10Z" fill="#999"/>` },
  { name: "绘图软件", on: false, line: false, art: svg`<rect x="0" y="0" width="24" height="24" fill="#14877c" stroke="#fff"/><path d="M2 18 7 4H9L14 18M4 13H12" fill="none" stroke="#fff" stroke-width="2.5"/><path d="M18 1V22M22 14H15V20H22" fill="none" stroke="#d5f3ee" stroke-width="1.3"/>` },
  { name: "宽带", on: false, line: true, art: svg`<path d="M8 12Q15 11 14 7 10 3 5 7 0 13 6 18 12 21 17 16 19 12 23 11" fill="none" stroke="#f8a01c" stroke-width="3.2"/>` },
  { name: "浏览器", on: false, line: true, art: svg`<circle cx="12" cy="12" r="10" fill="#5cc31a"/><path d="M7 12H18Q18 6 12 6 7 7 7 12 7 18 13 18 16 18 18 16" fill="none" stroke="#fff" stroke-width="2.6"/><path d="M3 22Q0 16 10 8T22 2" fill="none" stroke="#8ae23a" stroke-width="2"/>` },
  { name: "Chrome", on: false, line: true, art: svg`<circle cx="12" cy="12" r="11" fill="#fbc116"/><path d="M2.5 6.5A11 11 0 0 1 21.5 6.5L12 7 8 14Z" fill="#db4437"/><path d="M2.5 6.5A11 11 0 0 0 11 23L16 14 8 15Z" fill="#1da462"/><circle cx="12" cy="12" r="5" fill="#4285f4" stroke="#fff" stroke-width="1.3"/>` },
  { name: "压缩", on: false, line: true, art: svg`<path d="M0 3 8 1H14V3H24V15H0Z" fill="#52b5f0"/><path d="M0 12H24V16H0Z" fill="#2587d0"/><path d="M0 16H24V19H0Z" fill="#f6c21c"/><path d="M0 19H24V23H0Z" fill="#67b32e"/><rect x="15" y="1" width="6" height="22" fill="#6b3c1c"/><rect x="14" y="13" width="8" height="6" fill="none" stroke="#f6d35a" stroke-width="1.5"/>` },
  { name: "SketchUp", on: true, line: true, art: [suMark, suLines] },
];

@customElement("app-root")
export class AppRoot extends LitElement {
  static styles = css`
    :host { display: flex; flex-direction: column; position: relative; min-height: 100vh; overflow: hidden; background: #f0f0f0; color: #000; font: 12px/16px "Open Sans", "Noto Sans CJK SC", sans-serif; }
    button { font: inherit; color: inherit; border: 0; background: none; padding: 0; }
    svg { display: block; overflow: visible; }
    .title { display: flex; align-items: center; height: 22px; padding: 0 2px 0 3px; background: #fff; }
    .title h1 { flex: 1; margin: 0; padding: 1px 0 0 4px; font-size: 13px; font-weight: 400; }
    .title button { display: grid; place-items: center; width: 46px; height: 22px; }
    .menu { display: flex; gap: 15px; height: 18px; padding: 1px 0 0 7px; background: #fff; border-bottom: 2px solid #f4f4f4; font-family: "Noto Sans", "Noto Sans CJK SC", sans-serif; }
    .row { display: flex; }
    .row:first-child { padding-left: 65px; }
    .row tool-bar:nth-child(6) { margin-left: 2px; }
    .work { flex: 1; display: grid; grid-template-columns: 72px 1fr 280px; }
    .left { align-self: start; margin-top: 54px; padding: 0 1px 0 3px; border: solid #b4b4b4; border-width: 0 0 2px; background: #f1f1f1; }
    .left .grip { height: 2px; margin: 4px 1px; background: repeating-linear-gradient(90deg, #b8b8b8 0 2px, transparent 2px 4px); }
    .group { display: grid; grid-template-columns: 34px 34px; grid-auto-rows: 34px; }
    .group + .group { margin-top: 2px; padding-top: 5px; border-top: 1px solid #999; }
    .canvas { position: relative; margin-right: 6px; border: solid #6e6e6e; border-width: 2px 0 0 2px; border-right: 1px solid #fff; border-bottom: 2px solid #fff; background: #bfc0c5; overflow: hidden; }
    .canvas svg { position: absolute; width: 100%; height: 100%; }
    .tray { background: #f4f7fd; }
    .tray header { display: flex; align-items: center; gap: 9px; height: 18px; padding: 0 4px; background: linear-gradient(#bccbd9, #d5e3f1); }
    .tray h2 { flex: 1; margin: 0; font-size: 13px; font-weight: 400; }
    .tray header .close { display: grid; place-items: center; width: 12px; height: 12px; background: #c94f4f; }
    .list { display: grid; gap: 1px; padding-top: 2px; }
    .item { display: flex; align-items: center; height: 18px; box-sizing: border-box; border: 1px solid #a9a9a9; border-right: 0; background: linear-gradient(#ececec, #b2b2b2); }
    .item .name { flex: 1; display: flex; align-items: center; gap: 7px; padding: 1px 0 0 8px; text-align: left; }
    .item .x { display: grid; place-items: center; width: 14px; height: 14px; margin-right: 3px; box-sizing: border-box; border: 1px solid #999; background: #e8e8e8; }
    .status { display: flex; align-items: center; height: 27px; padding: 0 5px; font-size: 16px; line-height: 24px; }
    .status button { width: 16px; height: 16px; margin-right: 14px; }
    .status .bar { width: 1px; height: 9px; margin: 0 10px 0 -4px; background: #888; }
    .status p { flex: 1; margin: 0; }
    .status small { font-size: 13px; }
    .status label { display: flex; align-items: center; gap: 9px; }
    .status .bar.r { margin: 0 10px; }
    .status input { width: 200px; height: 25px; box-sizing: border-box; padding: 0 4px; border: 1px solid #a9bcd8; background: #fff; font: 13px "Open Sans", sans-serif; color: #222; }
    .task { display: flex; height: 40px; background: #d6d6d6; }
    .apps { display: flex; flex: 1; }
    .apps button { display: grid; place-items: center; width: 48px; box-sizing: border-box; border: solid transparent; border-width: 2px 0; }
    .apps button:nth-child(n + 4) { margin-left: 1px; }
    .apps button:nth-child(4) { margin-left: 3px; }
    .apps .line { border-image: linear-gradient(90deg, transparent 4px, #0b78d4 4px 44px, transparent 44px) 2; border-width: 0 0 2px; padding-top: 2px; }
    .apps .on { background: #efefef; border-image: none; border-bottom: 2px solid #0b78d4; }
    .systray { display: flex; align-items: center; padding-right: 10px; border-right: 1px solid #aaa; margin-right: 4px; }
    .systray > button { display: grid; place-items: center; width: 28px; height: 40px; }
    .systray > button:first-child { width: 20px; }
    .clock { width: 88px; box-sizing: border-box; padding-right: 4px; text-align: center; font-size: 12px; line-height: 19px; }
    .ime { position: absolute; right: 1px; bottom: 148px; display: flex; align-items: center; height: 24px; box-sizing: border-box; border: 1px solid #a6b3cc; background: #fff; }
    .ime button { display: grid; place-items: center; width: 22px; height: 22px; }
    .ime .logo { width: 31px; margin-left: -5px; }
    .overlay { position: absolute; right: 0; bottom: 0; width: 1920px; height: 1080px; pointer-events: none; }
    .mark { font-family: "Liberation Sans", "Noto Sans CJK SC", sans-serif; font-weight: 700; fill: #fff; opacity: 0.74; filter: drop-shadow(0 0 1px #70707c); }
    .heavy { stroke: #fff; stroke-width: 2px; }
    .url { font-weight: 400; font-family: "Noto Sans", sans-serif; stroke: #fff; stroke-width: 1px; }
    .inner { fill: #fff; stroke: #a8a8b2; stroke-width: 2px; }
  `;

  private viewport() {
    return html`<svg viewBox="75 197 1558 814" preserveAspectRatio="xMinYMin slice" shape-rendering="crispEdges" role="img" aria-label="模型视图">
      <path d="M901 630 905 434 908 197" fill="none" stroke="#0000c0" />
      <path d="M901 632 894 1012" fill="none" stroke="#0000c0" stroke-dasharray="1 3" />
      <path d="M901 630 1635 794" fill="none" stroke="#c00000" />
      <path d="M898 629 74 444" fill="none" stroke="#c00000" stroke-dasharray="1 3" />
      <path d="M1020 499 1297 197" fill="none" stroke="#00b000" />
      <path d="M896 634 552 1011" fill="none" stroke="#00b000" stroke-dasharray="3 5 1 5 1 5 1 5" />
      <path d="M905 435 997 449 987 648 901 629Z" fill="#fff" />
      <path d="M905 435 934 411 1023 424 997 449Z" fill="#c6c6c6" />
      <path d="M997 449 1023 424 1011 617 987 648Z" fill="#b3b3b3" />
      <path d="M905 435 997 449 1023 424M997 449 987 648" fill="none" stroke="#000" />
      <path d="M905 435 934 411 1023 424 1011 617 987 648 901 629Z" fill="none" stroke="#000" stroke-width="2" />
      <path d="M905 434 901 629" stroke="#0000c0" />
      <path d="M901 629 987 648" stroke="#a00000" />
    </svg>`;
  }

  render() {
    const menus = ["文件(F)", "编辑(E)", "视图(V)", "相机(C)", "绘图(R)", "工具(T)", "窗口(W)", "扩展程序 (x)", "帮助(H)"];
    const panels = ["图元信息", "材质", "组件", "样式", "标记", "阴影", "场景", "工具向导", "柔化边线", "照片匹配"];
    return html`
      <div class="title">
        <svg width="15" height="15" viewBox="0 0 24 24">${suMark}${suLines}</svg>
        <h1>无标题 - SketchUp Pro 2020</h1>
        <button aria-label="最小化"><svg width="10" height="10"><path d="M0 5.5H10" stroke="#000" /></svg></button>
        <button aria-label="还原"><svg width="10" height="10" fill="none" stroke="#000"><path d="M.5 2.5H7.5V9.5H.5ZM2.5 2V.5H9.5V7.5H8" /></svg></button>
        <button aria-label="关闭"><svg width="10" height="10"><path d="M0 0 10 10M10 0 0 10" stroke="#000" /></svg></button>
      </div>
      <nav class="menu">${menus.map((m) => html`<button>${m}</button>`)}</nav>
      <div class="bars">${rows.map((r) => html`<div class="row">${r.map((b) => html`<tool-bar items=${b}></tool-bar>`)}</div>`)}</div>

      <div class="work">
        <div class="left">
          <div class="grip"></div>
          ${sideGroups.map((g) => html`<div class="group">${g.split(" ").map((t) => html`<tool-button tool=${t}></tool-button>`)}</div>`)}
        </div>
        <main class="canvas">${this.viewport()}</main>
        <aside class="tray">
          <header>
            <h2>默认面板</h2>
            <svg width="7" height="9"><path d="M1.5 5V.5H5.5V5M0 5.5H7M3.5 6V9" fill="none" stroke="#000" /><path d="M4 0H6V5H4Z" /></svg>
            <button class="close" aria-label="关闭面板"><svg width="5" height="6"><path d="M0 0 5 6M5 0 0 6" stroke="#fff" stroke-width="2" /></svg></button>
          </header>
          <div class="list">
            ${panels.map(
              (p) => html`<div class="item">
                <button class="name"><svg width="6" height="8"><path d="M0 0 6 4 0 8Z" /></svg>${p}</button>
                <button class="x" aria-label="关闭${p}"><svg width="5" height="5"><path d="M0 0 5 5M5 0 0 5" stroke="#222" stroke-width="1.3" /></svg></button>
              </div>`
            )}
          </div>
        </aside>
      </div>

      <div class="status">
        <button aria-label="地理位置"><svg width="16" height="16"><circle cx="8" cy="8" r="6.5" fill="none" stroke="#aaa" /><path d="M8 3A3 3 0 0 1 9 9L8 13 7 9A3 3 0 0 1 8 3" fill="#999" /></svg></button>
        <button aria-label="归属信息"><svg width="16" height="16"><circle cx="8" cy="8" r="6.5" fill="none" stroke="#111" stroke-width="1.3" /><circle cx="8" cy="4.5" r="1.2" /><path d="M5.5 6.5H10.5V8H9V13H7V8H5.5Z" /></svg></button>
        <span class="bar"></span>
        <p>选取平面进行推拉。<small>Ctrl = </small>切换创建新的开始平面。</p>
        <span class="bar r"></span>
        <label>距离<input type="text" .value=${`13' 1 3/8"`} /></label>
      </div>

      <div class="task">
        <div class="apps">
          ${taskIcons.map((t) => html`<button class=${classMap({ on: t.on, line: t.line })} aria-label=${t.name}><svg width="24" height="24">${t.art}</svg></button>`)}
        </div>
        <div class="systray">
          <button aria-label="显示隐藏的图标"><svg width="12" height="7"><path d="M0 6.5 6 .5 12 6.5" fill="none" stroke="#111" stroke-width="1.5" /></svg></button>
          <button aria-label="输入法"><svg width="16" height="16"><text x="1" y="15" font-size="20" font-weight="700" fill="#fff" stroke="#444">A</text></svg></button>
          <button aria-label="搜狗输入法"><svg width="16" height="16" viewBox="0 0 28 28">${sogou}</svg></button>
          <div class="clock">16:21<br />2021/4/17</div>
          <button aria-label="通知"><svg width="24" height="24"><path d="M0 3H16V16H12V20L8 16H0Z" /><path d="M3 6H13M3 9H13M3 12H10" stroke="#d6d6d6" stroke-width="1.3" /><circle cx="16" cy="18" r="8" fill="#d6d6d6" stroke="#777" /><text x="12" y="23" font-size="13" font-weight="600">4</text></svg></button>
        </div>
      </div>

      <div class="ime">
        <button class="logo" aria-label="搜狗"><svg width="28" height="28">${sogou}</svg></button>
        <button aria-label="英文"><svg width="14" height="14"><path d="M1 14 6 1H8L13 14M3 9.5H11" fill="none" stroke="#1c74c8" stroke-width="2.4" /></svg></button>
        <button aria-label="标点"><svg width="12" height="12"><circle cx="3" cy="4" r="2.2" fill="#1c74c8" /><path d="M8 7H11Q11 10 8 12" fill="none" stroke="#1c74c8" stroke-width="2" /></svg></button>
        <button aria-label="表情"><svg width="16" height="16" fill="none" stroke="#1c74c8" stroke-width="1.7"><circle cx="8" cy="8" r="7" /><path d="M4 9Q8 14 12 9M6 4.5V7M10 4.5V7" /></svg></button>
        <button aria-label="语音"><svg width="12" height="16"><rect x="3" y="0" width="6" height="10" rx="3" fill="#1c74c8" /><path d="M1 6Q1 12 6 12 11 12 11 6M6 12V15M3 15H9" fill="none" stroke="#1c74c8" stroke-width="1.6" /></svg></button>
        <button aria-label="键盘"><svg width="16" height="12"><rect width="16" height="12" rx="1" fill="#1c74c8" /><path d="M2 3.5H14M2 6.5H14M4 9.5H12" stroke="#fff" stroke-width="1.5" stroke-dasharray="2 1" /></svg></button>
        <button aria-label="账户"><svg width="14" height="15"><circle cx="6" cy="4" r="3.2" fill="#b6c2dc" /><path d="M0 13Q0 8 6 8 12 8 12 13Z" fill="#b6c2dc" /><rect x="7.5" y="8.5" width="6" height="6" fill="#fff" stroke="#b6c2dc" /></svg></button>
        <button aria-label="皮肤"><svg width="14" height="14"><path d="M0 3 4 1Q7 3 10 1L14 3 12 7 11 6V13H3V6L2 7Z" fill="#1c74c8" /></svg></button>
        <button aria-label="工具箱"><svg width="13" height="13"><path d="M0 0H6V6H0ZM0 7H6V13H0ZM7 7H13V13H7Z" fill="#1c74c8" /><rect x="8" y="1" width="4" height="4" fill="none" stroke="#1c74c8" stroke-width="1.5" /></svg></button>
      </div>

      <svg class="overlay" viewBox="0 0 1920 1080" aria-hidden="true">
        <path d="M178 33 187 47 182 50 211 200 255 457 253 457 203 200 176 51 172 49Z" fill="#ee1c24" />
        <g class="mark">
          <text x="1472" y="982" font-size="77">Bai</text>
          <ellipse cx="1605" cy="918" rx="13" ry="17" /><ellipse cx="1629" cy="893" rx="12" ry="17" />
          <ellipse cx="1660" cy="896" rx="13" ry="17" /><ellipse cx="1679" cy="925" rx="13" ry="17" />
          <path d="M1641 920C1657 920 1663 935 1672 943 1684 952 1690 965 1682 977 1675 988 1655 985 1641 983 1625 984 1608 986 1601 974 1595 962 1603 952 1612 943 1622 932 1627 920 1641 920Z" />
          <text class="inner" x="1611" y="974" font-size="48">du</text>
          <text class="heavy" x="1697" y="977" font-size="57">经验</text>
          <text class="url" x="1477" y="1026" font-size="39">jingyan.baidu.com</text>
        </g>
      </svg>
    `;
  }
}
